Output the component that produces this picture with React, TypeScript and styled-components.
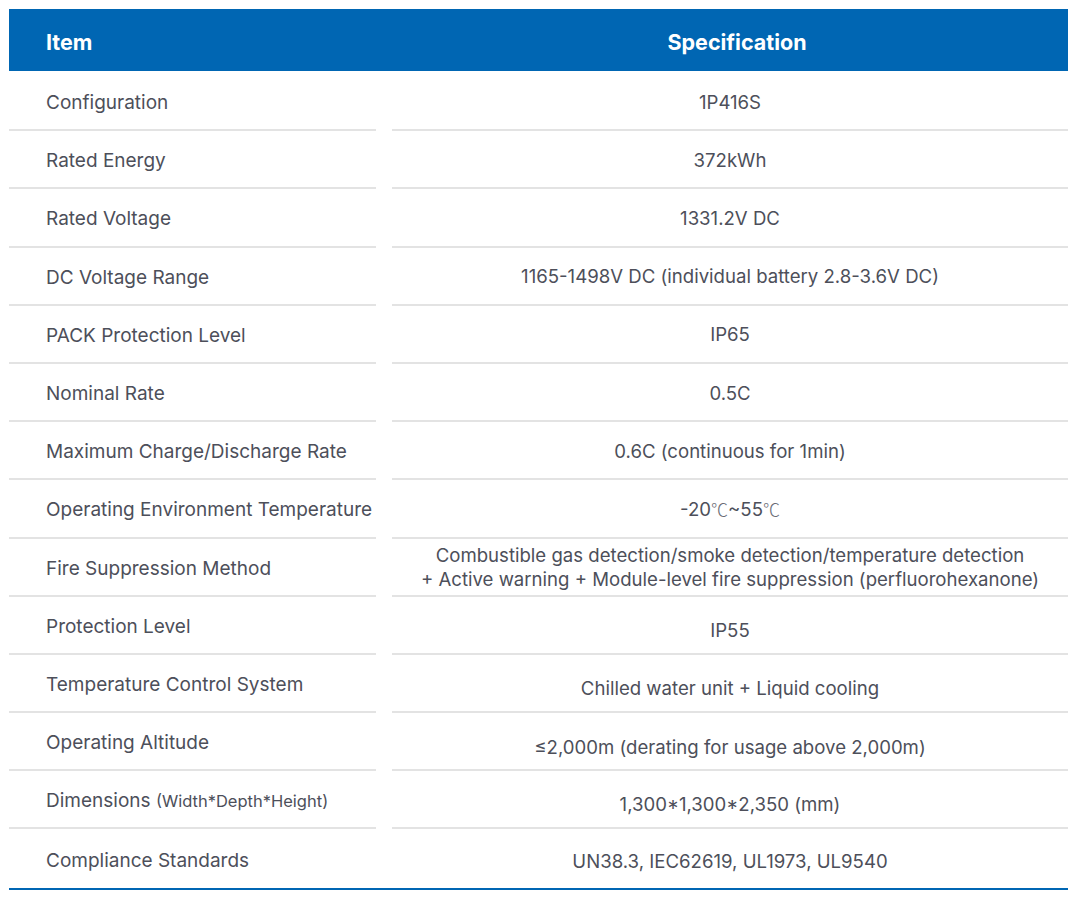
import React from "react";
import styled, { createGlobalStyle } from "styled-components";

const Global = createGlobalStyle`
  html, body { margin: 0; padding: 0; background: #ffffff; }
  body { font-family: Inter, "Noto Sans", sans-serif; }
`;

const Page = styled.div`
  padding: 9px 8px 0 9px;
  width: 1059px;
`;

const Header = styled.div`
  display: grid;
  grid-template-columns: 367px 1fr;
  height: 62px;
  background: #0066b3;
  align-items: center;
  color: #ffffff;
  font-weight: 700;
  font-size: 21.5px;
  padding-top: 3px;
  box-sizing: border-box;
`;

const HeadLeft = styled.div`
  padding-left: 37px;
`;

const HeadRight = styled.div`
  text-align: center;
  padding-left: 30px;
`;

const Body = styled.div`
  padding-top: 2px;
  border-bottom: 2px solid #0066b3;
`;

const Row = styled.div`
  display: grid;
  grid-template-columns: 367px 1fr;
  column-gap: 16px;
  height: 58.2px;
`;

const ItemCell = styled.div<{ $last?: boolean }>`
  display: flex;
  align-items: center;
  padding-left: 37px;
  padding-top: 3px;
  border-bottom: ${(p) => (p.$last ? "none" : "2px solid #e3e3e3")};
  color: #4d4f5a;
  font-size: 19px;
  white-space: nowrap;
`;

const ValueCell = styled.div<{ $last?: boolean; $drop?: number }>`
  display: flex;
  align-items: center;
  justify-content: center;
  text-align: center;
  padding-top: ${(p) => p.$drop ?? 1}px;
  border-bottom: ${(p) => (p.$last ? "none" : "2px solid #e3e3e3")};
  color: #4d4f5a;
  font-size: 18.6px;
  line-height: 24px;
`;

const Small = styled.span`
  font-size: 16.5px;
`;

const Deg = styled.span`
  font-family: "Noto Sans CJK SC", sans-serif;
  font-weight: 300;
  font-size: 17px;
  color: #6a6c75;
`;

type Spec = { item: React.ReactNode; value: React.ReactNode; drop?: number };

const specs: Spec[] = [
  { item: "Configuration", value: "1P416S" },
  { item: "Rated Energy", value: "372kWh" },
  { item: "Rated Voltage", value: "1331.2V DC" },
  { item: "DC Voltage Range", value: "1165-1498V DC (individual battery 2.8-3.6V DC)" },
  { item: "PACK Protection Level", value: "IP65" },
  { item: "Nominal Rate", value: "0.5C" },
  { item: "Maximum Charge/Discharge Rate", value: "0.6C (continuous for 1min)" },
  {
    item: "Operating Environment Temperature",
    value: (
      <>
        -20<Deg>℃</Deg>~55<Deg>℃</Deg>
      </>
    ),
  },
  {
    item: "Fire Suppression Method",
    value: (
      <>
        Combustible gas detection/smoke detection/temperature detection
        <br />+ Active warning + Module-level fire suppression (perfluorohexanone)
      </>
    ),
  },
  { item: "Protection Level", value: "IP55", drop: 11 },
  { item: "Temperature Control System", value: "Chilled water unit + Liquid cooling", drop: 11 },
  { item: "Operating Altitude", value: "≤2,000m (derating for usage above 2,000m)", drop: 11 },
  {
    item: (
      <>
        Dimensions <Small>(Width*Depth*Height)</Small>
      </>
    ),
    value: "1,300*1,300*2,350 (mm)",
    drop: 9,
  },
  { item: "Compliance Standards", value: "UN38.3, IEC62619, UL1973, UL9540", drop: 4 },
];

export default function App() {
  return (
    <>
      <Global />
      <Page>
        <Header>
          <HeadLeft>Item</HeadLeft>
          <HeadRight>Specification</HeadRight>
        </Header>
        <Body>
          {specs.map((s, i) => (
            <Row key={i}>
              <ItemCell $last={i === specs.length - 1}>
                <span>{s.item}</span>
              </ItemCell>
              <ValueCell $last={i === specs.length - 1} $drop={s.drop}>
                <span>{s.value}</span>
              </ValueCell>
            </Row>
          ))}
        </Body>
      </Page>
    </>
  );
}
